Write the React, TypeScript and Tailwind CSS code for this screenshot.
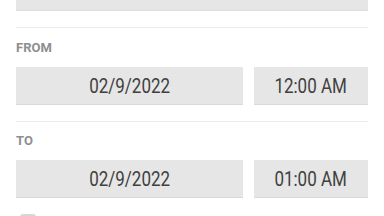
const FONT = { fontFamily: "Roboto, 'Liberation Sans', sans-serif" };

function Field({ value, className }: { value: string; className?: string }) {
  return (
    <div
      className={`flex h-[37px] items-center justify-center bg-[#e6e6e6] text-[20px] text-[#404040] shadow-[0_1px_0_#d9d9d9] ${className ?? ""}`}
    >
      <span className="inline-block scale-x-[0.85]">{value}</span>
    </div>
  );
}

function Range({ label, date, time, top }: { label: string; date: string; time: string; top: string }) {
  return (
    <div>
      <div className={`${top} mb-[11px] text-[13px] font-bold leading-4 text-[#8e8e8e]`}>{label}</div>
      <div className="flex gap-[11px]">
        <Field value={date} className="w-[227px]" />
        <Field value={time} className="flex-1" />
      </div>
    </div>
  );
}

export default function App() {
  return (
    <div className="h-[216px] overflow-hidden bg-white px-4" style={FONT}>
      <div className="h-[10px] bg-[#e6e6e6] shadow-[0_1px_0_#dcdcdc]" />
      <div className="mt-[17px] h-px bg-[#ececec]" />
      <Range label="FROM" date="02/9/2022" time="12:00 AM" top="pt-[12px]" />
      <div className="mt-[17px] h-px bg-[#ececec]" />
      <Range label="TO" date="02/9/2022" time="01:00 AM" top="pt-[11px]" />
      <div className="ml-1 mt-[17px] h-4 w-4 rounded-[3px] border-2 border-[#d6d6d6]" />
    </div>
  );
}
